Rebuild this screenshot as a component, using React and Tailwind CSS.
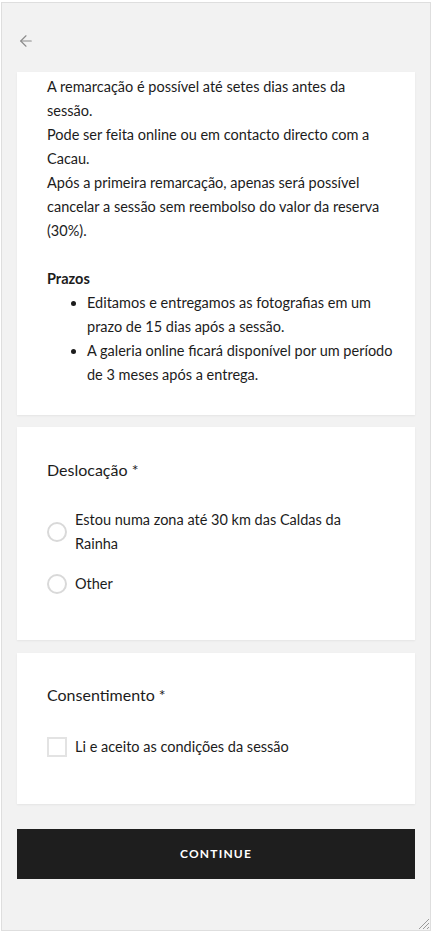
import { ArrowLeft } from 'lucide-react'

const font = { fontFamily: 'Lato, "Open Sans", sans-serif' }

function Radio({ children }) {
  return (
    <label className="flex items-center gap-2">
      <span className="h-5 w-5 shrink-0 rounded-full border-2 border-[#d9d9d9] bg-white" />
      <span className="text-[14.5px] leading-6 text-[#1c1c1c]">{children}</span>
    </label>
  )
}

export default function App() {
  return (
    <div className="h-[932px] w-[432px] bg-white pt-[2px] pl-px pr-px pb-px" style={font}>
      <div className="relative flex h-full flex-col border border-[#dedede] bg-[#f2f2f2] px-[15px]">
        {/* Back */}
        <div className="flex h-[69px] items-center pt-[6px]">
          <ArrowLeft size={18} strokeWidth={1.5} className="text-[#8a8a8a]" />
        </div>

        {/* Terms card */}
        <div className="bg-white pl-[30px] pr-[24px] pt-[3px] pb-[28px] text-[14.5px] leading-6 text-[#1c1c1c] shadow-[0_1px_2px_rgba(0,0,0,0.06)]">
          <p>A remarcação é possível até setes dias antes da sessão.</p>
          <p>Pode ser feita online ou em contacto directo com a Cacau.</p>
          <p>Após a primeira remarcação, apenas será possível cancelar a sessão sem reembolso do valor da reserva (30%).</p>
          <p className="mt-6 font-bold">Prazos</p>
          <ul className="-mr-[14px] list-disc pl-[40px]">
            <li>Editamos e entregamos as fotografias em um prazo de 15 dias após a sessão.</li>
            <li>A galeria online ficará disponível por um período de 3 meses após a entrega.</li>
          </ul>
        </div>

        {/* Deslocação */}
        <div className="mt-[12px] bg-white px-[30px] pt-[31px] pb-[44px] shadow-[0_1px_2px_rgba(0,0,0,0.06)]">
          <p className="text-[16px] leading-6 text-[#1c1c1c]">Deslocação *</p>
          <div className="mt-[26px] flex flex-col gap-4">
            <Radio>Estou numa zona até 30 km das Caldas da Rainha</Radio>
            <Radio>Other</Radio>
          </div>
        </div>

        {/* Consentimento */}
        <div className="mt-[13px] bg-white px-[30px] pt-[30px] pb-[45px] shadow-[0_1px_2px_rgba(0,0,0,0.06)]">
          <p className="text-[16px] leading-6 text-[#1c1c1c]">Consentimento *</p>
          <label className="mt-[28px] flex items-center gap-2">
            <span className="h-5 w-5 shrink-0 border-2 border-[#e3e3e3] bg-white" />
            <span className="text-[14.5px] leading-6 text-[#1c1c1c]">Li e aceito as condições da sessão</span>
          </label>
        </div>

        {/* Continue */}
        <button className="mt-[25px] flex h-[50px] w-full items-center justify-center bg-[#1e1e1e] text-[12px] font-bold tracking-[0.1em] text-white">
          CONTINUE
        </button>

        {/* Resize grip */}
        <svg className="absolute right-0 bottom-0" width="14" height="14" viewBox="0 0 14 14">
          <path d="M13 3L3 13M13 7L7 13M13 11L11 13" stroke="#9a9a9a" strokeWidth="1" />
        </svg>
      </div>
    </div>
  )
}
